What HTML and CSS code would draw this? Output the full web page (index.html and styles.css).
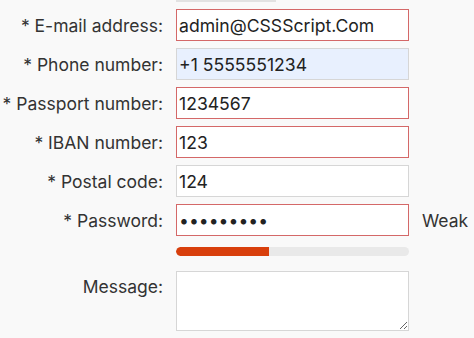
FILE: index.html
```html
<!DOCTYPE html>
<html lang="en">

<head>
    <meta charset="UTF-8">
    <meta name="viewport" content="width=device-width, initial-scale=1.0">
    <title>Form Validation</title>
    <link rel="stylesheet" href="styles.css">
</head>

<body>
    <form class="form">
        <span></span>
        <div class="prev-field"></div>
        <span></span>

        <label class="label" for="email">* E-mail address:</label>
        <input class="field invalid" id="email" type="email" value="admin@CSSScript.Com">
        <span></span>

        <label class="label" for="phone">* Phone number:</label>
        <input class="field autofill" id="phone" type="tel" value="+1 5555551234">
        <span></span>

        <label class="label" for="passport">* Passport number:</label>
        <input class="field invalid" id="passport" type="text" value="1234567">
        <span></span>

        <label class="label" for="iban">* IBAN number:</label>
        <input class="field invalid" id="iban" type="text" value="123">
        <span></span>

        <label class="label" for="postal">* Postal code:</label>
        <input class="field" id="postal" type="text" value="124">
        <span></span>

        <label class="label" for="password">* Password:</label>
        <input class="field invalid" id="password" type="password" value="123456789">
        <span class="strength-text">Weak</span>

        <span></span>
        <div class="strength">
            <div class="strength-bar" style="width: 40%"></div>
        </div>
        <span></span>

        <label class="label message-label" for="message">Message:</label>
        <textarea class="field message" id="message"></textarea>
        <span></span>
    </form>
</body>

</html>
```

FILE: styles.css
```css
body {
    margin: 0;
    background: #f9f9f9;
    font-family: Inter, "Noto Sans", sans-serif;
    color: #333333;
}

.form {
    display: grid;
    grid-template-columns: 163px 233px auto;
    column-gap: 13px;
    row-gap: 7px;
    align-items: center;
}

.prev-field {
    height: 2px;
    width: 100px;
    background: #e2e2e2;
}

.label {
    text-align: right;
    font-size: 17.5px;
    white-space: nowrap;
}

.field {
    box-sizing: border-box;
    width: 233px;
    height: 32px;
    margin: 0;
    padding: 0 2px;
    border: 1px solid #d6d6d6;
    background: #ffffff;
    font-family: Inter, "Noto Sans", sans-serif;
    font-size: 17.6px;
    color: #222222;
    outline: none;
}

.field.invalid {
    border-color: #d46868;
}

.field.autofill {
    background: #e8f0fe;
}

.strength-text {
    font-size: 17.5px;
}

.strength {
    height: 9px;
    margin: 4px 0 8px;
    background: #e9e9e9;
    border-radius: 5px;
    overflow: hidden;
}

.strength-bar {
    height: 100%;
    background: #d83f0c;
    border-radius: 5px 0 0 5px;
}

.message-label {
    align-self: start;
    padding-top: 5px;
}

.message {
    height: 60px;
    resize: vertical;
}
```
